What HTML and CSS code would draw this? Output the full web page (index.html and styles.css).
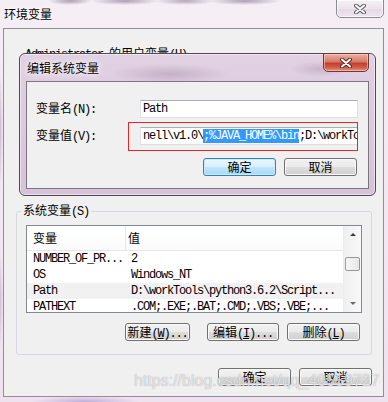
FILE: index.html
```html
<!DOCTYPE html>
<html>
<head>
<title>环境变量</title>
<meta http-equiv="content-type" content="text/html; charset=utf8">
<link rel="stylesheet" href="styles.css">
</head>
<body>
<div class="desktop">

    <!-- outer window: 环境变量 -->
    <div class="window envwin">
        <div class="titlebar">
            <span class="title">环境变量</span>
            <span class="closebtn">
                <svg width="12" height="10" viewBox="0 0 12 10"><path d="M2 1.5L10 8.5M10 1.5L2 8.5" stroke="#55555f" stroke-width="4" stroke-linecap="round"/><path d="M2 1.5L10 8.5M10 1.5L2 8.5" stroke="#fff" stroke-width="2" stroke-linecap="round"/></svg>
            </span>
        </div>
        <div class="client">
            <div class="usersec">
                <span class="mono">Administrator </span>的用户变量<span class="mono">(U)</span>
            </div>
            <fieldset class="group">
                <legend>系统变量<span class="mono">(S)</span></legend>
                <div class="listview">
                    <div class="listbody">
                        <div class="lvhead"><span class="c1">变量</span><span class="c2">值</span></div>
                        <div class="lvrow mono"><span class="c1">NUMBER_OF_PR...</span><span class="c2">2</span></div>
                        <div class="lvrow mono"><span class="c1">OS</span><span class="c2">Windows_NT</span></div>
                        <div class="lvrow mono hot"><span class="c1">Path</span><span class="c2">D:\workTools\python3.6.2\Script...</span></div>
                        <div class="lvrow mono"><span class="c1">PATHEXT</span><span class="c2">.COM;.EXE;.BAT;.CMD;.VBS;.VBE;...</span></div>
                    </div>
                    <div class="vscroll">
                        <span class="sbbtn"><i class="arrow up"></i></span>
                        <span class="thumb"></span>
                        <span class="sbbtn"><i class="arrow down"></i></span>
                    </div>
                </div>
                <div class="btnrow groupbtns">
                    <button class="btn b-new">新建<span class="mono">(<u>W</u>)...</span></button>
                    <button class="btn b-edit">编辑<span class="mono">(<u>I</u>)...</span></button>
                    <button class="btn b-del">删除<span class="mono">(<u>L</u>)</span></button>
                </div>
            </fieldset>
            <div class="btnrow dlgbtns">
                <button class="btn">确定</button>
                <button class="btn">取消</button>
            </div>
        </div>
    </div>

    <!-- modal dialog: 编辑系统变量 -->
    <div class="window editdlg">
        <div class="titlebar">
            <span class="title">编辑系统变量</span>
            <span class="closebtn red">
                <svg width="12" height="10" viewBox="0 0 12 10"><path d="M2 1.5L10 8.5M10 1.5L2 8.5" stroke="#5a2a24" stroke-width="4" stroke-linecap="round"/><path d="M2 1.5L10 8.5M10 1.5L2 8.5" stroke="#fff" stroke-width="2" stroke-linecap="round"/></svg>
            </span>
        </div>
        <div class="panel">
            <div class="field">
                <label>变量名<span class="mono">(N):</span></label>
                <div class="edit mono">Path</div>
            </div>
            <div class="field">
                <label>变量值<span class="mono">(V):</span></label>
                <div class="edit mono">nell\v1.0\<span class="sel">;%JAVA_HOME%\bin</span>;D:\workTools\python3.6.2</div>
            </div>
            <div class="btnrow panelbtns">
                <button class="btn default">确定</button>
                <button class="btn">取消</button>
            </div>
        </div>
    </div>

    <div class="redmark"></div>
    <div class="watermark">https://blog.csdn.net/qq_40559727</div>
</div>
</body>
</html>
```

FILE: styles.css
```css
body {
    margin: 0;
    overflow: hidden;
    font-family: "Noto Sans CJK SC", sans-serif;
    font-size: 12px;
    color: #000;
}
.mono {
    font-family: "Liberation Mono", "Noto Sans CJK SC", monospace;
    letter-spacing: -1.2px;
}
.desktop {
    position: relative;
    width: 388px;
    height: 402px;
    overflow: hidden;
    background:
        radial-gradient(ellipse 22px 4px at 70px 1px, rgba(80,64,90,.45), transparent),
        radial-gradient(ellipse 34px 4px at 125px 1px, rgba(80,64,90,.45), transparent),
        radial-gradient(ellipse 30px 4px at 185px 1px, rgba(80,64,90,.4), transparent),
        radial-gradient(ellipse 36px 4px at 245px 1px, rgba(80,64,90,.45), transparent),
        radial-gradient(ellipse 55px 6px at 85px 402px, rgba(150,130,200,.55), transparent),
        radial-gradient(ellipse 3px 60px at 0 130px, rgba(150,110,160,.4), transparent),
        radial-gradient(ellipse 3px 50px at 0 300px, rgba(150,110,160,.35), transparent),
        linear-gradient(#f5eef5, #efe2ef);
}
.window {
    position: absolute;
    box-sizing: border-box;
}
.envwin {
    left: 0;
    top: 0;
    width: 388px;
    height: 402px;
}
.titlebar {
    display: flex;
    align-items: flex-start;
    height: 28px;
}
.title {
    padding: 6px 0 0 4px;
    line-height: 16px;
    text-shadow: 0 0 4px #fff, 0 0 8px #fff;
}
.closebtn {
    margin-left: auto;
    margin-right: 4px;
    box-sizing: border-box;
    width: 48px;
    height: 19px;
    margin-top: -1px;
    border: 1px solid #8c8a92;
    border-radius: 0 0 5px 5px;
    background: linear-gradient(#f6f1f6, #ece3ec 50%, #e4d8e5 51%, #eee6ef);
    box-shadow: inset 0 0 0 1px rgba(255,255,255,.7);
    display: flex;
    align-items: center;
    justify-content: center;
}
.closebtn.red {
    margin-right: 0;
    width: 46px;
    border-color: #6b3b35;
    background: linear-gradient(#eab0a4, #d77a68 45%, #c2402c 55%, #d0604a 80%, #e6947f);
    box-shadow: inset 0 0 0 1px rgba(255,220,210,.5);
}
.client {
    box-sizing: border-box;
    margin: 0 4px 0 3px;
    height: 369px;
    border: 1px solid #8e8e94;
    background: #f0f0f0;
    padding-top: 17px;
}
.usersec {
    height: 157px;
    padding-left: 21px;
    line-height: 14px;
}
.group {
    box-sizing: border-box;
    width: 356px;
    margin: 0 0 0 12px;
    padding: 6px 9px 13px 9px;
    border: 1px solid #d5d9dd;
    border-radius: 3px;
}
.group legend {
    padding: 0 2px;
    margin-left: -5px;
    line-height: 14px;
}
.listview {
    box-sizing: border-box;
    display: flex;
    height: 88px;
    border: 1px solid #828790;
    background: #fff;
}
.listbody {
    flex: 1;
    overflow: hidden;
}
.lvhead {
    display: flex;
    height: 24px;
    border-bottom: 1px solid #e3e6ea;
    line-height: 24px;
    background: linear-gradient(#fff, #fbfbfc);
}
.lvhead .c1 {
    border-right: 1px solid #e3e6ea;
}
.lvhead .c2 {
    padding-left: 2px;
}
.c1 {
    width: 92px;
    padding-left: 6px;
    flex: none;
    white-space: nowrap;
}
.c2 {
    padding-left: 6px;
    white-space: nowrap;
}
.lvrow {
    display: flex;
    height: 16px;
    line-height: 16px;
}
.lvrow.hot {
    background: #f1f1f1;
}
.vscroll {
    width: 17px;
    display: flex;
    flex-direction: column;
    align-items: center;
    border-left: 1px solid #ececec;
    background: linear-gradient(to right, #f0f0f0, #f8f8f8);
}
.sbbtn {
    height: 17px;
    display: flex;
    align-items: center;
    justify-content: center;
}
.vscroll .sbbtn:last-child {
    margin-top: auto;
}
.arrow {
    width: 0;
    height: 0;
    border-left: 3px solid transparent;
    border-right: 3px solid transparent;
}
.arrow.up {
    border-bottom: 3px solid #3a3a3a;
}
.arrow.down {
    border-top: 3px solid #6a6a6a;
}
.thumb {
    box-sizing: border-box;
    width: 15px;
    height: 14px;
    margin-top: 14px;
    border: 1px solid #979797;
    border-radius: 2px;
    background: linear-gradient(to right, #f6f6f6, #e6e6e6);
}
.btnrow {
    display: flex;
}
.btn {
    box-sizing: border-box;
    height: 18px;
    padding: 0;
    border: 1px solid #707070;
    border-radius: 3px;
    background: linear-gradient(#f2f2f2, #ebebeb 48%, #dddddd 52%, #cfcfcf);
    box-shadow: inset 0 0 0 1px #fbfbfb;
    font-family: "Noto Sans CJK SC", sans-serif;
    font-size: 12px;
    line-height: 16px;
    color: #000;
    text-align: center;
}
.btn.default {
    border-color: #3c7fb1;
    background: linear-gradient(#eaf6fd, #d9f0fc 48%, #bee6fd 52%, #a7d9f5);
    box-shadow: inset 0 0 0 1px #c8ebfb;
}
.groupbtns {
    margin-top: 10px;
}
.b-new {
    width: 65px;
    margin-left: 99px;
}
.b-edit {
    width: 72px;
    margin-left: 17px;
}
.b-del {
    width: 73px;
    margin-left: 8px;
}
.dlgbtns {
    margin-top: 13px;
    justify-content: flex-end;
    gap: 8px;
    padding-right: 11px;
}
.dlgbtns .btn {
    width: 73px;
}

/* edit dialog */
.editdlg {
    left: 19px;
    top: 53px;
    width: 357px;
    height: 143px;
    padding: 0 6px;
    border: 1px solid #4e4a52;
    border-radius: 6px;
    background:
        radial-gradient(ellipse 60px 10px at 150px 20px, rgba(150,120,150,.35), transparent),
        radial-gradient(ellipse 30px 8px at 300px 15px, rgba(150,120,150,.3), transparent),
        linear-gradient(#e1d1e3, #d6c2d9);
    box-shadow: inset 0 0 0 1px rgba(255,255,255,.5);
}
.editdlg .titlebar {
    height: 27px;
}
.editdlg .title {
    padding: 6px 0 0 1px;
}
.panel {
    box-sizing: border-box;
    height: 108px;
    border: 1px solid #7a7580;
    background: #f0f0f0;
    padding-top: 18px;
}
.field {
    display: flex;
    align-items: center;
    height: 18px;
    padding-left: 9px;
}
.field + .field {
    margin-top: 9px;
}
.field label {
    width: 104px;
    flex: none;
    line-height: 16px;
}
.edit {
    box-sizing: border-box;
    width: 218px;
    height: 18px;
    padding-left: 2px;
    border: 1px solid #dbdfe6;
    border-top-color: #abadb3;
    border-left-color: #e2e3ea;
    background: #fff;
    line-height: 16px;
    white-space: nowrap;
    overflow: hidden;
}
.edit .sel {
    background: #3399ff;
    color: #fff;
}
.panelbtns {
    margin-top: 13px;
    justify-content: flex-end;
    gap: 8px;
    padding-right: 11px;
}
.panelbtns .btn {
    width: 73px;
}

/* screenshot annotations */
.redmark {
    position: absolute;
    left: 128px;
    top: 122px;
    width: 230px;
    height: 29px;
    box-sizing: border-box;
    border: 1px solid #e8262a;
}
.watermark {
    position: absolute;
    left: 134px;
    top: 372px;
    font-family: "Liberation Sans", sans-serif;
    font-size: 16px;
    color: rgba(255,255,255,.7);
    text-shadow: 0 0 1px rgba(110,110,110,.7);
    white-space: nowrap;
}
```
